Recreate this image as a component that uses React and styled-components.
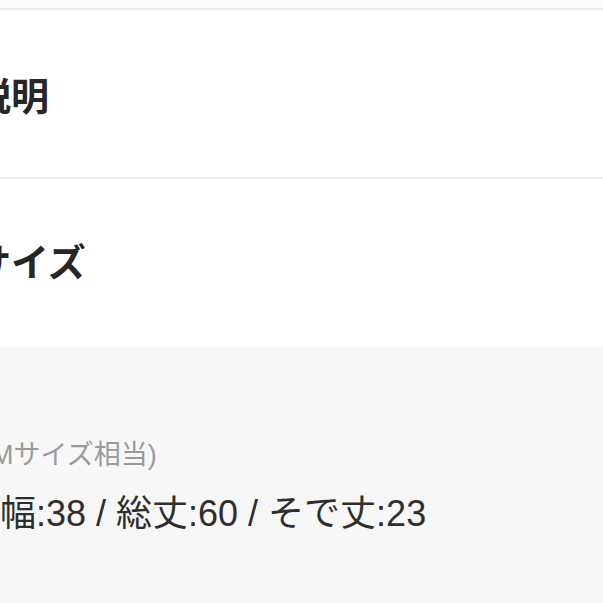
import React from "react";
import styled, { createGlobalStyle } from "styled-components";

const Global = createGlobalStyle`
  html, body { margin: 0; padding: 0; background: #ffffff; }
  body { font-family: "Liberation Sans", "Noto Sans CJK JP", sans-serif; overflow: hidden; }
`;

const Page = styled.div`
  width: 603px;
  min-height: 603px;
  display: flex;
  flex-direction: column;
  overflow: hidden;
`;

const TopEdge = styled.div`
  height: 8px;
  background: #fbfbfb;
  border-bottom: 1px solid #e9e9e9;
`;

const Shade = styled.div`
  height: 3px;
  background: linear-gradient(#f3f3f3, #ffffff);
`;

const Section = styled.section`
  padding: ${(p) => p.$pad};
  background: #ffffff;
`;

const Divider = styled.div`
  height: 2px;
  background: #efefef;
`;

const Heading = styled.h2`
  margin: 0 0 0 -27px;
  font-size: 38px;
  line-height: 44px;
  font-weight: 700;
  color: #262626;
  white-space: nowrap;
  font-family: "Liberation Sans", "Noto Sans CJK JP", sans-serif;
`;

const Details = styled.div`
  flex: 1;
  background: #f7f7f7;
  padding: 90px 0 0 0;
  display: flex;
  flex-direction: column;
  gap: 17px;
`;

const Note = styled.div`
  margin-left: ${(p) => p.$indent || "0px"};
  font-size: ${(p) => p.$size};
  line-height: ${(p) => p.$lh};
  color: ${(p) => p.$color};
  white-space: nowrap;
`;

export default function App() {
  return (
    <>
      <Global />
      <Page>
        <TopEdge />
        <Shade />
        <Section $pad="63px 0 58px 0">
          <Heading>説明</Heading>
        </Section>
        <Divider />
        <Section $pad="62px 0 62px 0">
          <Heading>サイズ</Heading>
        </Section>
        <Details>
          <Note $indent="-18px" $size="27px" $lh="36px" $color="#9a9a9a">
            (Mサイズ相当)
          </Note>
          <Note $size="36px" $lh="48px" $color="#2e2e2e">
            幅:38 / 総丈:60 / そで丈:23
          </Note>
        </Details>
      </Page>
    </>
  );
}
